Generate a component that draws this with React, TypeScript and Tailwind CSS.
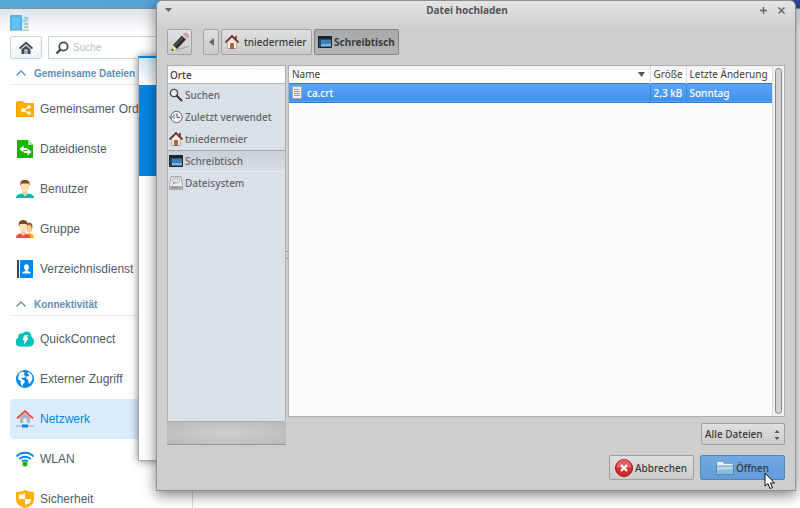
import { ReactNode } from "react";

interface NavItemProps {
    label: string;
    icon: ReactNode;
    active?: boolean;
}

const FolderShareIcon = () => (
    <svg viewBox="0 0 18 18" className="size-[18px]">
        <path d="M1 1h6l2 2h9v13H1z" fill="#ffb000" />
        <path d="M0 2h1.500v14H18v1H0z" fill="#ffa000" />
        <path d="M13 7 7 10.500 13 13" stroke="#fff" strokeWidth="1.300" fill="none" />
        <circle cx="7" cy="10.200" r="1.900" fill="#fff" />
        <circle cx="13" cy="7" r="1.700" fill="#fff" />
        <circle cx="13" cy="13" r="1.700" fill="#fff" />
    </svg>
);

const FileServiceIcon = () => (
    <svg viewBox="0 0 18 18" className="size-[18px]">
        <path d="M1 0h11l5 5v13H1z" fill="#1db100" />
        <path d="M12 0v5h5z" fill="#a5e39a" />
        <path d="M7.500 5.500 3.500 9l4 3.500V10H11V8H7.500z" fill="#fff" />
        <path d="M11.500 8.500 15.500 12l-4 3.500V13H8v-2h3.500z" fill="#fff" />
    </svg>
);

const UserIcon = () => (
    <svg viewBox="0 0 18 18" className="size-[18px]">
        <path d="M0 18c0-3 3-4 6.500-4.500h5C15 14 18 15 18 18z" fill="#00b9bd" />
        <path d="M6.500 11h5v3L9 16.500 6.500 14z" fill="#f3cf9e" />
        <ellipse cx="9" cy="6.500" rx="4" ry="5.500" fill="#ffdfb3" />
        <path d="M4.500 6C3.500 1.500 6 0 9 0s5.500 1.500 4.500 6L12.500 3.500h-7z" fill="#7a4a1e" />
    </svg>
);

const GroupIcon = () => (
    <svg viewBox="0 0 18 18" className="size-[18px]">
        <path d="M12 13c4 .5 6 2 6 5h-5z" fill="#ffb000" />
        <ellipse cx="13.500" cy="8" rx="2.800" ry="4.500" fill="#f7c98e" />
        <path d="M10.500 5c0-3 5.500-4 6 1l-.5 3-1.500-4z" fill="#a0601f" />
        <path d="M0 18c0-3 2-4 5-4.500h4c3 .5 5.500 1.500 5.500 4.500z" fill="#f74848" />
        <path d="M5 11h4.500v3L7.200 16 5 14z" fill="#f3cf9e" />
        <ellipse cx="7.200" cy="7" rx="3.800" ry="5.200" fill="#ffdfb3" />
        <path d="M3 6.500C1.800 2 4.500 0 7.200 0s5.500 2 4.300 6.500L10.500 4H4z" fill="#7a4a1e" />
    </svg>
);

const DirectoryIcon = () => (
    <svg viewBox="0 0 18 18" className="size-[18px]">
        <path d="M1 0h2v18H1z" fill="#3d4854" />
        <path d="M4 0h13v18H4z" fill="#0087f0" />
        <ellipse cx="10.500" cy="7.200" rx="2.400" ry="3" fill="#fff" />
        <path d="M9.500 9h2v2l3 1v1.500h-8V12l3-1z" fill="#fff" />
    </svg>
);

const QuickConnectIcon = () => (
    <svg viewBox="0 0 18 18" className="size-[18px]">
        <path d="M4.500 16.500A4.500 4.500 0 0 1 2 8C1.500 4 5.500 2.500 7 3.500c1-3 8.500-3 8.500 3.500 4 2 3 9.500-1.500 9.500z" fill="#00bfbf" />
        <path d="m8 5.500 4-.5-1 3 1.500.5-4.500 6 .5-4.500-2 .5z" fill="#fff" />
    </svg>
);

const GlobeIcon = () => (
    <svg viewBox="0 0 18 18" className="size-[18px]">
        <circle cx="9" cy="9" r="9" fill="#0086e5" />
        <path d="m3 3.500 3-2 2.500 1L8 5l2 1.500L8 8 6 7.500 5.500 9 8 10l1 2-2 2v2.500L5 15l-.500-4L2 9z" fill="#fff" />
        <path d="m11 3 2-1 3 3 .5 4-1.500 3-2 2-1-4-2-2 1-2 2 .5V5z" fill="#fff" />
    </svg>
);

const NetworkIcon = () => (
    <svg viewBox="0 0 18 18" className="size-[18px]">
        <path d="M4 7.500 9 3l5 4.500V13H4z" fill="#aab4be" />
        <path d="M7.200 8.500h3.600V13H7.200z" fill="#e6edf3" />
        <path d="m1 8.500 8-7.500 8 7.500" stroke="#f74848" strokeWidth="1.800" fill="none" />
        <path d="M0 16h18" stroke="#99a6b2" />
        <path d="M6 14.500h6v3H6z" fill="#0086e5" />
    </svg>
);

const WifiIcon = () => (
    <svg viewBox="0 0 18 18" className="size-[18px]" fill="none" stroke="#0086e5" strokeWidth="1.800">
        <path d="M.5 6.500c4.500-5 12.500-5 17 0M3.300 9.200c3-3.300 8.400-3.300 11.400 0M6 11.500c1.600-1.600 4.400-1.600 6 0" />
        <circle cx="9" cy="14" r="2.500" fill="#1db100" stroke="none" />
    </svg>
);

const ShieldIcon = () => (
    <svg viewBox="0 0 18 18" className="size-[18px]">
        <path d="M0 2c4 0 6-1 9-2 3 1 5 2 9 2v7c0 5-3 7-9 9-6-2-9-4-9-9z" fill="#ffb000" />
        <path d="M9 3v6H3V4.500C5.500 4.500 7 4 9 3z" fill="#fff" />
        <path d="M9 9h6c0 3.500-2.500 5-6 6z" fill="#fff" />
    </svg>
);

const HouseIcon = () => (
    <svg viewBox="0 0 14 14" className="size-[14px] shrink-0">
        <path d="M2.500 7 7 2.500 11.500 7v6.500h-9z" fill="#f2ebe3" stroke="#a5988c" strokeWidth=".7" />
        <path d="M10 1h2v4l-2-2z" fill="#9b4a3c" />
        <path d="M.5 7.500 7 1l6.500 6.500" stroke="#6d1f1c" strokeWidth="1.600" fill="none" />
        <path d="M5.500 8.500h3v5h-3z" fill="#b9642c" stroke="#7d3c15" strokeWidth=".6" />
    </svg>
);

const DesktopIcon = () => (
    <svg viewBox="0 0 14 12" className="h-3 w-[14px] shrink-0">
        <path d="M.5.5h13v11H.5z" fill="#3e7fae" stroke="#1a2530" />
        <path d="M1 8h12v2H1z" fill="#80b3d6" />
        <path d="M0 0h14v3.500H0z" fill="#182530" />
        <path d="M1 4h2v7H1z" fill="#254a69" />
    </svg>
);

const SearchIcon = () => (
    <svg viewBox="0 0 14 14" className="size-[14px] shrink-0">
        <circle cx="5" cy="5" r="3.600" fill="#eef1f4" stroke="#444" strokeWidth="1.400" />
        <path d="m8 8 4.500 4.500" stroke="#333" strokeWidth="2" strokeLinecap="round" />
    </svg>
);

const RecentIcon = () => (
    <svg viewBox="0 0 14 14" className="size-[14px] shrink-0" fill="none">
        <circle cx="7.500" cy="7" r="5.700" fill="#efefef" stroke="#666" />
        <path d="M8 3.500V7.500h3" stroke="#555" />
        <path d="M5 4v5M0 6l1.800 2.500L4 6" stroke="#666" strokeWidth=".9" />
    </svg>
);

const DriveIcon = () => (
    <svg viewBox="0 0 14 14" className="size-[14px] shrink-0">
        <path d="M2 .5h10l1.500 9v4H.5v-4z" fill="#eee" stroke="#999" strokeWidth=".8" />
        <path d="M.5 10h13v3H.5z" fill="#aaa" />
        <ellipse cx="7" cy="4.500" rx="4" ry="2.800" fill="#ddd" stroke="#aaa" strokeWidth=".7" />
        <path d="m6 6-2.500 2.500M2 11.500h7" stroke="#888" />
    </svg>
);

const NavItem = ({ label, icon, active }: NavItemProps) => (
    <li>
        <a
            href="#"
            className={
                active
                    ? "flex h-10 items-center gap-[6px] rounded-l-sm bg-[#d9edff] pl-[6px] text-[#0086e5]"
                    : "flex h-10 items-center gap-[6px] pl-[6px] text-[#4f5b66]"
            }
        >
            {icon}
            <span className="whitespace-nowrap">{label}</span>
        </a>
    </li>
);

const NavHeading = ({ label }: { label: string }) => (
    <h2 className="flex h-[23px] items-center gap-2 border-b border-[#e6eaee] pl-[6px] text-[10px] font-bold text-[#6090b5]">
        <svg viewBox="0 0 10 6" className="h-[6px] w-[10px]">
            <path d="M.5 5.500 5 1l4.500 4.500" stroke="#6090b5" strokeWidth="1.300" fill="none" />
        </svg>
        {label}
    </h2>
);

const sharing: NavItemProps[] = [
    { label: "Gemeinsamer Ordner", icon: <FolderShareIcon /> },
    { label: "Dateidienste", icon: <FileServiceIcon /> },
    { label: "Benutzer", icon: <UserIcon /> },
    { label: "Gruppe", icon: <GroupIcon /> },
    { label: "Verzeichnisdienst", icon: <DirectoryIcon /> },
];

const connectivity: NavItemProps[] = [
    { label: "QuickConnect", icon: <QuickConnectIcon /> },
    { label: "Externer Zugriff", icon: <GlobeIcon /> },
    { label: "Netzwerk", icon: <NetworkIcon />, active: true },
    { label: "WLAN", icon: <WifiIcon /> },
    { label: "Sicherheit", icon: <ShieldIcon /> },
];

const places = [
    { label: "Suchen", icon: <SearchIcon /> },
    { label: "Zuletzt verwendet", icon: <RecentIcon /> },
    { label: "tniedermeier", icon: <HouseIcon /> },
    { label: "Schreibtisch", icon: <DesktopIcon />, active: true },
    { label: "Dateisystem", icon: <DriveIcon /> },
];

const ControlPanel = () => (
    <div className="mt-2 flex min-h-[500px] flex-1 flex-col border-t border-[#7f93a3] bg-white bg-linear-to-b from-[#dfe4e9] to-white to-[24px] font-['Liberation_Sans',Arial,sans-serif] text-[12px]">
        <div className="flex h-[27px] items-center pl-[10px]">
            <svg viewBox="0 0 20 16" className="h-4 w-5">
                <path d="M0 0h12v16H0z" fill="#4db4ea" />
                <path d="M2 2h8v12H2z" fill="#66c2f0" />
                <path d="M12 0h7v16h-7z" fill="#dde8ef" />
                <path d="M14 3h4M13 6h3M14 9h4" stroke="#55acd4" />
                <path d="M15 5h3M14 12h4" stroke="#8bbd72" />
                <path d="M0 15.500h19" stroke="#b4c5d0" />
            </svg>
        </div>
        <div className="flex w-[193px] flex-1 flex-col border-r border-[#d8dde2] pl-[10px]">
            <div className="flex gap-[6px]">
                <button aria-label="Start" className="flex h-[23px] w-8 shrink-0 items-center justify-center rounded-xs border border-[#c8d5e0] bg-linear-to-b from-white to-[#eef3f7]">
                    <svg viewBox="0 0 14 14" className="size-[14px]">
                        <path d="M2.500 7.500 7 4l4.500 3.500V13h-9z" fill="#414b55" />
                        <path d="M.5 7.500 7 1.800 13.500 7.500" stroke="#414b55" strokeWidth="1.800" fill="none" />
                        <path d="M2.500 8.200 7 4.300 11.500 8.200" stroke="#fff" strokeWidth=".7" fill="none" />
                        <path d="M5.500 8.500h3V13h-3z" fill="#fff" />
                        <path d="M6.500 9.500h1V13h-1z" fill="#414b55" />
                    </svg>
                </button>
                <label className="flex h-[23px] flex-1 items-center gap-1 border border-[#c8d5e0] bg-white pl-[6px]">
                    <svg viewBox="0 0 14 14" className="size-[14px] shrink-0">
                        <circle cx="8.500" cy="5.500" r="4.200" fill="none" stroke="#414b55" strokeWidth="1.800" />
                        <path d="M5.500 8.500 1.500 12.500" stroke="#414b55" strokeWidth="2.400" />
                    </svg>
                    <input
                        type="text"
                        aria-label="Suche"
                        placeholder="Suche"
                        className="w-full min-w-0 text-[10px] outline-none placeholder:text-[#b8c0c8]"
                    />
                </label>
            </div>
            <nav className="pt-[3px]">
                <NavHeading label="Gemeinsame Dateien" />
                <ul className="pt-1">
                    {sharing.map((item) => <NavItem key={item.label} {...item} />)}
                </ul>
                <div className="pt-1">
                    <NavHeading label="Konnektivität" />
                </div>
                <ul className="pt-[3px]">
                    {connectivity.map((item) => <NavItem key={item.label} {...item} />)}
                </ul>
            </nav>
        </div>
    </div>
);

const Toolbar = () => (
    <div className="flex h-[26px] items-stretch">
        <button aria-label="Dateiname eingeben" className="flex w-[25px] items-center justify-center rounded-xs border border-[#a3a3a3] bg-linear-to-b from-[#e0e0e0] to-[#cbcbcb]">
            <svg viewBox="0 0 20 20" className="size-5 shrink-0">
                <path d="m4 18 13-4 2 1-11 3.500z" fill="#b0b0b0" />
                <path d="m1.500 19 1.500-6 4 4z" fill="#f0e68a" />
                <path d="m1.500 19 .5-2.500L4 18.300z" fill="#222" />
                <path d="M3 13 12 3.500l4 4L7 17z" fill="#303030" />
                <path d="m4.500 14 9-9" stroke="#777" />
                <path d="m12 3.500 1.500-1.500 4 4L16 7.500z" fill="#d5d5d5" />
                <path d="M13.500 2C15.500-.5 20 3.500 17.500 6z" fill="#dc9acb" stroke="#a8709b" strokeWidth=".5" />
            </svg>
        </button>
        <div className="ml-[11px] flex gap-[2px]">
            <button aria-label="Zurück" className="flex w-4 items-center justify-center rounded-xs border border-[#a3a3a3] bg-linear-to-b from-[#dedede] to-[#cbcbcb]">
                <svg viewBox="0 0 5 8" className="h-2 w-[5px]">
                    <path d="M5 0v8L0 4z" fill="#666" />
                </svg>
            </button>
            <button className="flex w-[91px] items-center gap-[5px] rounded-xs border border-[#a3a3a3] bg-linear-to-b from-[#dedede] to-[#cbcbcb] pl-[3px]">
                <HouseIcon />
                tniedermeier
            </button>
            <button className="flex w-[85px] items-center gap-[2px] rounded-xs border border-[#868686] bg-linear-to-b from-[#a8a8a8] to-[#b4b4b4] pl-[3px] font-bold">
                <DesktopIcon />
                Schreibtisch
            </button>
        </div>
    </div>
);

const Places = () => (
    <div className="flex w-[119px] shrink-0 flex-col">
        <div className="flex-1 border border-[#b0b0b0] bg-[#dae0e7]">
            <h3 className="flex h-[18px] items-center border-b border-[#b9bdc2] bg-linear-to-b from-[#f0f0f0] to-white to-50% pl-[2px]">Orte</h3>
            <ul>
                {places.map((place) => (
                    <li key={place.label}>
                        <button
                            className={
                                place.active
                                    ? "flex h-[22px] w-full items-center gap-[2px] border-t border-b border-t-[#a2a7ad] border-b-[#e8ecf0] bg-linear-to-b from-[#cbd0d7] to-[#d8dde4] pl-[1px] text-[#666]"
                                    : "flex h-[22px] w-full items-center gap-[2px] pl-[1px] text-[#666]"
                            }
                        >
                            {place.icon}
                            {place.label}
                        </button>
                    </li>
                ))}
            </ul>
        </div>
        <div className="h-[23px] border-b border-[#969696] bg-[radial-gradient(ellipse_at_center,#cfcfcf,#b9b9b9)]" />
    </div>
);

const FileList = () => (
    <div className="flex h-[352px] border border-[#b0b0b0] bg-[#fcfcfc]">
        <div className="flex-1">
            <table className="w-full table-fixed border-collapse text-left">
                <thead>
                    <tr className="h-[17px] bg-linear-to-b from-[#f0f0f0] to-white to-50%">
                        <th className="p-0 pl-[3px] font-normal">
                            <div className="flex items-center justify-between pr-[5px]">
                                Name
                                <svg viewBox="0 0 7 5" className="h-[5px] w-[7px]">
                                    <path d="M0 0h7L3.500 5z" fill="#555" />
                                </svg>
                            </div>
                        </th>
                        <th className="w-9 border-l border-[#ddd] p-0 pl-[3px] font-normal">Größe</th>
                        <th className="w-[86px] border-l border-[#ddd] p-0 pl-[3px] font-normal whitespace-nowrap">Letzte Änderung</th>
                    </tr>
                </thead>
                <tbody>
                    <tr className="h-[19px] border-y border-[#2f7cd3] bg-linear-to-b from-[#5ba5f8] to-[#3f92ec] text-white">
                        <td className="p-0 pl-[3px]">
                            <div className="flex items-center gap-[5px]">
                                <svg viewBox="0 0 10 13" className="h-[13px] w-[10px]">
                                    <path d="M.5.5h9v12h-9z" fill="#eee" stroke="#aaa" />
                                    <path d="M2 3.500h5M2 5.500h6M2 7.500h6M2 9.500h6" stroke="#999" />
                                </svg>
                                ca.crt
                            </div>
                        </td>
                        <td className="border-l border-[#3a83d5] p-0 pl-[3px] whitespace-nowrap">2,3 kB</td>
                        <td className="border-l border-[#3a83d5] p-0 pl-[3px]">Sonntag</td>
                    </tr>
                </tbody>
            </table>
        </div>
        <div className="flex w-[12px] justify-center border-l border-[#ddd] bg-[#f0f0f0] py-[2px]">
            <div className="w-[7px] rounded-full border border-[#888] bg-[#d2d2d2]" />
        </div>
    </div>
);

const UploadDialog = () => (
    <section
        aria-label="Datei hochladen"
        className="absolute top-0 right-1 left-[156px] rounded-t-md border border-[#8f8f8f] bg-[#cecece] bg-linear-to-b from-[#e4e4e4] to-[#cecece] to-[28px] px-[10px] pb-[10px] font-['Noto_Sans','Open_Sans',sans-serif] text-[10px] leading-4 font-medium text-[#3c3c3c] shadow-[0_4px_14px_rgba(0,0,0,0.5)]"
    >
        <header className="flex h-[18px] items-center">
            <button aria-label="Fenstermenü" className="w-7">
                <svg viewBox="0 0 7 4" className="-ml-[2px] h-1 w-[7px]">
                    <path d="M0 0h7L3.500 4z" fill="#666" />
                </svg>
            </button>
            <h1 className="flex-1 pr-[18px] text-center font-bold text-[#555]">Datei hochladen</h1>
            <div className="flex w-7 justify-end gap-[11px]">
                <button aria-label="Maximieren">
                    <svg viewBox="0 0 7 7" className="size-[7px]">
                        <path d="M3.500 0v7M0 3.500h7" stroke="#666" strokeWidth="1.500" />
                    </svg>
                </button>
                <button aria-label="Schließen">
                    <svg viewBox="0 0 7 7" className="size-[7px]">
                        <path d="m.5.5 6 6M6.500.5l-6 6" stroke="#666" strokeWidth="1.500" />
                    </svg>
                </button>
            </div>
        </header>
        <div className="py-[10px]">
            <Toolbar />
        </div>
        <div className="flex">
            <Places />
            <div className="flex w-[2px] items-center">
                <div className="h-2 w-[2px] border-y border-[#999]" />
            </div>
            <div className="min-w-0 flex-1">
                <FileList />
                <div className="flex justify-end pt-[6px]">
                    <div className="relative">
                        <select aria-label="Dateityp" className="h-[22px] w-[84px] appearance-none rounded-xs border border-[#a0a0a0] bg-linear-to-b from-[#e0e0e0] to-[#cbcbcb] pl-[3px]">
                            <option>Alle Dateien</option>
                        </select>
                        <svg viewBox="0 0 6 10" className="pointer-events-none absolute top-[7px] right-[5px] h-[10px] w-[6px]">
                            <path d="M.5 3 3 0l2.500 3zM.5 7 3 10l2.500-3z" fill="#555" />
                        </svg>
                    </div>
                </div>
            </div>
        </div>
        <footer className="flex justify-end gap-[6px] pt-[10px]">
            <button className="flex h-[25px] w-[85px] items-center gap-[2px] rounded-xs border border-[#a0a0a0] bg-linear-to-b from-[#e0e0e0] to-[#cbcbcb] pl-[5px]">
                <svg viewBox="0 0 18 18" className="size-[18px] shrink-0">
                    <circle cx="9" cy="9" r="8.500" fill="#d32a2f" stroke="#a31216" />
                    <path d="M1.500 8a7.500 7.500 0 0 1 15 0c-4 2-11 2-15 0z" fill="#e4605f" />
                    <path d="m6 6 6 6M12 6l-6 6" stroke="#fff" strokeWidth="2.400" />
                </svg>
                Abbrechen
            </button>
            <button className="flex h-[25px] w-[85px] items-center justify-center gap-[2px] rounded-xs border border-[#5684b8] bg-linear-to-b from-[#72a8e2] to-[#629bd9]">
                <svg viewBox="0 0 18 14" className="h-[14px] w-[18px] shrink-0">
                    <path d="M1 .5h6l1 2h9v11H1z" fill="#edf3f7" stroke="#7a9bb5" strokeWidth=".8" />
                    <path d="M.5 5h17v8.500H.5z" fill="#8bbce0" stroke="#4f7fa6" strokeWidth=".8" />
                    <path d="M1 5.500h16v2.500L1 9z" fill="#b5d7ee" />
                </svg>
                Öffnen
            </button>
        </footer>
    </section>
);

export default function App() {
    return (
        <main className="relative flex min-h-screen flex-col overflow-hidden bg-linear-to-r from-[#58a8d8] via-[#4a9bd2] to-[#2747a5]">
            <ControlPanel />
            {/* settings window, mostly hidden behind the file chooser */}
            <div className="absolute top-[56px] left-[138px] h-[405px] w-40 border border-t-2 border-[#aaa] border-t-[#0086e5] bg-white shadow-[0_0_8px_rgba(0,0,0,0.5)]">
                <div className="h-[27px] bg-linear-to-b from-[#d5e8f7] to-white" />
                <div className="h-[91px] bg-[#0086e5]" />
            </div>
            <UploadDialog />
            <svg viewBox="0 0 12 18" className="pointer-events-none absolute top-[472px] left-[764px] h-[18px] w-3">
                <path d="M1 1v13l3-2.500 2 5 2.500-1-2-4.500h4z" fill="#fff" stroke="#111" />
            </svg>
        </main>
    );
}
